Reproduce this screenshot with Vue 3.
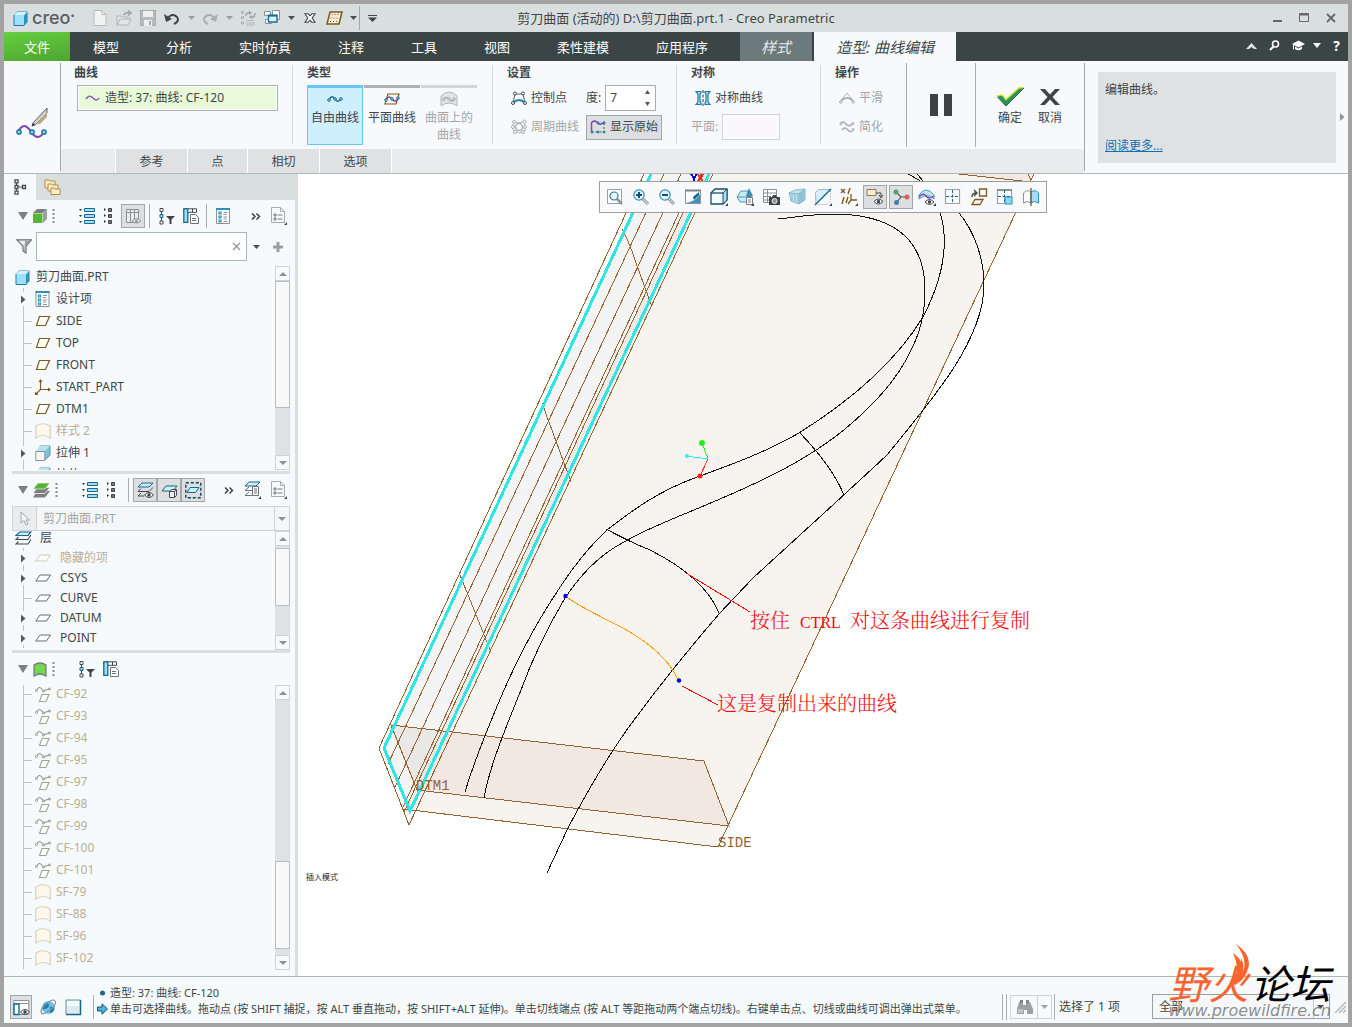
<script setup>
import { h, ref } from 'vue'

const DARK = '#444a4c'
const BLUE = '#17688c'
const SKY = '#9fdcf7'
const BROWN = '#7d5a20'

const lens = (inner) =>
  `<path d="M11 11l5 5" stroke="#7f888c" stroke-width="3"/><path d="M11 11l5 5" stroke="#d5dadc" stroke-width="1.200"/><circle cx="7" cy="7" r="5.200" fill="#dff3fc" stroke="#3d8fb2" stroke-width="1.200"/>${inner}`
const eye = (x, y) =>
  `<path d="M${x} ${y}q4.500 -5 9 0q-4.500 5 -9 0z" fill="#fff" stroke="#3d4345"/><circle cx="${x + 4.5}" cy="${y}" r="1.700" fill="#3d4345"/>`
const corner = '<path d="M18 15v3h-3z" fill="#444"/>'

// name: [width, height, markup]
const icons = {
  cube: [15, 15, `<path d="M1 4.500l3-3.500h10v10l-3 3.500H1z" fill="#9ee0fb" stroke="#1d7ea8"/><path d="M11 4.500l3-3.500v10l-3 3.500z" fill="#2a93bf"/><path d="M1 4l3-3h10l-3 3z" fill="#d3f2fe"/>`],
  fresh: [16, 16, '<path d="M2 .5h8l4 4v11H2z" fill="#f1f3f3" stroke="#b6babb"/><path d="M10 .5v4h4" fill="none" stroke="#b6babb"/>'],
  open: [16, 16, '<path d="M1 15V6h4l1 1h6v2M1 15l3-6h11l-3 6z" fill="#e2e5e5" stroke="#b0b5b6"/><path d="M8 5q1-3 6-2M12 .5l3 2.500-3 2.500" fill="none" stroke="#9da3a4" stroke-width="1.500"/>'],
  save: [16, 16, '<path d="M.5 .5h15v15H.5z" fill="#b7bbbc" stroke="#a5aaab"/><path d="M3 1h10v6H3z" fill="#eef0f0"/><path d="M4 10h8v6H4z" fill="#eceeee"/><path d="M9 11h2v4H9z" fill="#a5aaab"/>'],
  undo: [16, 14, '<path d="M3 8q5-7 10-2q3 4-3 7" fill="none" stroke="#3f4547" stroke-width="2"/><path d="M0 3l2 8 6-3z" fill="#3f4547"/>'],
  redo: [16, 14, '<path d="M13 8q-5-7-10-2q-3 4 3 7" fill="none" stroke="#a9aeaf" stroke-width="2"/><path d="M16 3l-2 8-6-3z" fill="#a9aeaf"/>'],
  drop: [7, 4, '<path d="M0 0h7l-3.500 4z" fill="#4a5052"/>'],
  dropLight: [7, 4, '<path d="M0 0h7l-3.500 4z" fill="#9ba1a2"/>'],
  regen: [16, 16, '<path d="M1.500 1.500h2v2h-2zM1.500 6.500h2v2h-2zM1.500 12h2v2h-2z" fill="none" stroke="#a8adae"/><path d="M6 13h9M6 15h9M6 10.500h8" stroke="#b5babb"/><path d="M6 6q0-4 4-3M15 3q0 5-4 4" fill="none" stroke="#9da3a4" stroke-width="1.500"/><path d="M9 .5l3 2.500-3 2zM12 9l-3-2 3-2z" fill="#9da3a4"/>'],
  windows: [16, 16, '<path d="M.5 1.500h6v4h-6zM1.500 9.500h6v4h-6z" fill="#fff" stroke="#8c9294"/><path d="M8.500 .5h7v9h-7z" fill="#fff" stroke="#8c9294"/><path d="M4.500 5.500H13V12H4.500z" fill="#d9f2fd" stroke="#1b6f95" stroke-width="1.400"/><path d="M4 5.500h9.500" stroke="#1b6f95" stroke-width="2"/>'],
  xbox: [12, 10, '<path d="M1 .8h3.200l1.800 2 1.800-2H11L8.200 5 11 9.200H7.800L6 7.200l-1.800 2H1L3.800 5z" fill="#fff" stroke="#3f4547" stroke-width="1.100"/>'],
  sketchPlane: [17, 14, `<path d="M4 1h12l-3 12H1z" fill="#f5ecd6" stroke="${BROWN}" stroke-width="1.500"/><path d="M5.500 3.500h8M4.500 7h8M4 10.500h8" stroke="${BROWN}" stroke-dasharray="1 2"/>`],
  custom: [9, 7, '<path d="M0 .5h9" stroke="#3f4547"/><path d="M0 2.500h9L4.500 7z" fill="#3f4547"/>'],
  min: [10, 12, '<path d="M0 9h9" stroke="#666" stroke-width="2"/>'],
  max: [11, 10, '<path d="M.5 .5h9v8h-9z" fill="none" stroke="#666"/><path d="M0 1.500h10" stroke="#666" stroke-width="2"/>'],
  close: [10, 10, '<path d="M1 1l8 8M9 1l-8 8" stroke="#666" stroke-width="1.800"/>'],
  chevUp: [11, 6, '<path d="M0 6L5.500 0 11 6H8L5.500 4 3 6z" fill="#dfe5e4"/>'],
  find: [11, 11, '<circle cx="6.500" cy="4" r="3" fill="none" stroke="#fff" stroke-width="1.600"/><path d="M4.500 6.500L1 10" stroke="#fff" stroke-width="2"/>'],
  hat: [13, 11, '<path d="M0 4l6.500-3.500L13 4 6.500 7.500z" fill="#fff"/><path d="M3 6.500v2.500q3.500 2.500 7 0V6.500L6.500 8.500z" fill="#fff"/><path d="M1.500 4.500v5" stroke="#fff"/>'],
  dropWhite: [8, 5, '<path d="M0 0h8L4 5z" fill="#fff"/>'],
  brush: [32, 32, '<path d="M31 1L17 16l-1 3 3-1L31 6z" fill="#cfd4d6" stroke="#596063"/><path d="M31 5L20 17h4l7-7z" fill="#c7a67e"/><path d="M17 16l-1 3 3-1z" fill="#333"/><path d="M2 25q5-10 11-3l3 4q6 9 13-2" fill="none" stroke="#7d49b5" stroke-width="2"/><g fill="#7fd0ef" stroke="#1b6f95" stroke-width="1.300"><circle cx="3" cy="25" r="2.200"/><circle cx="16" cy="25" r="2.200"/><circle cx="28" cy="25" r="2.200"/></g>'],
  wave: [15, 6, '<path d="M1 4q3-5 7-1t6 0" fill="none" stroke="#8a5cc0" stroke-width="1.500"/>'],
  freeCurve: [16, 8, '<path d="M2 5q3-6 6-1t6-1" fill="none" stroke="#17688c" stroke-width="1.300"/><g fill="#bfe8f8" stroke="#17688c"><circle cx="2" cy="5" r="1.300"/><circle cx="8" cy="4" r="1.300"/><circle cx="14" cy="4" r="1.300"/></g>'],
  planeCurve: [16, 12, `<path d="M4 1h11l-3 10H1z" fill="#fbf6ea" stroke="${BROWN}" stroke-width="1.200"/><path d="M1.500 7.500q3-6 6.500-1.500t6.500-1" fill="none" stroke="#7d49b5" stroke-width="1.500"/><g fill="#bfe8f8" stroke="#17688c"><circle cx="2" cy="7" r="1.300"/><circle cx="8" cy="6" r="1.300"/><circle cx="14" cy="5" r="1.300"/></g>`],
  surfCurve: [18, 16, '<path d="M1 5q8-8 16 0v10q-8-6-16 0z" fill="#e2e4e5" stroke="#b3b8ba"/><path d="M3 10q3-6 6-2t6 0" fill="none" stroke="#a5abad" stroke-width="1.300"/><g fill="#eee" stroke="#a5abad"><circle cx="4" cy="8" r="1.300"/><circle cx="9" cy="8" r="1.300"/><circle cx="14" cy="8" r="1.300"/></g>'],
  ctrl: [16, 15, '<path d="M2 12L4 3h8l2 9" fill="none" stroke="#596063"/><path d="M2 12q6-6 12 0" fill="none" stroke="#1d86b5" stroke-width="2"/><g fill="#fff" stroke="#444a4c"><circle cx="4" cy="2.500" r="1.500"/><circle cx="12" cy="2.500" r="1.500"/><circle cx="2" cy="12" r="1.500"/><circle cx="14" cy="12" r="1.500"/></g>'],
  periodic: [16, 16, '<path d="M3 3l5 1 6-2v6l0 4-6 2-6-3V7z" fill="none" stroke="#b0b5b7"/><circle cx="8" cy="8" r="3.500" fill="none" stroke="#b0b5b7" stroke-width="1.500"/><g fill="#fff" stroke="#a8adaf"><circle cx="3" cy="3" r="1.500"/><circle cx="13.500" cy="2.500" r="1.500"/><circle cx="2" cy="8" r="1.500"/><circle cx="14" cy="8" r="1.500"/><circle cx="4" cy="13" r="1.500"/><circle cx="12" cy="13" r="1.500"/></g>'],
  original: [16, 14, '<path d="M1.500 11V4q0-3 3.500-3l2 1q2 3 4 2t4-2" fill="none" stroke="#7d49b5" stroke-width="1.500"/><path d="M1.500 12h13M14 3v8" stroke="#17688c" stroke-dasharray="2 2"/><g fill="#9fdcf7" stroke="#17688c"><circle cx="2" cy="12" r="1"/><circle cx="8" cy="12" r="1"/><circle cx="14" cy="12" r="1"/><circle cx="8" cy="3" r="1"/><circle cx="14" cy="3" r="1"/></g>'],
  mirror: [16, 16, '<path d="M1 1.500h5v1q-1 1-1 2.500v5q0 2 1 3v1.500H1q2-2 2-3V5q0-1.500-2-3.500zM15 1.500h-5v1q1 1 1 2.500v5q0 2-1 3v1.500h5q-2-2-2-3V5q0-1.500 2-3.500z" fill="#a6dcf2" stroke="#1d7ea8" stroke-width="1.200"/><path d="M8 0v16" stroke="#333" stroke-dasharray="3 1.500"/>'],
  smooth: [16, 12, '<path d="M1 10L8 1l7 9" fill="none" stroke="#b5babc"/><path d="M1 10q7-8 14 0" fill="none" stroke="#9da3a5" stroke-width="1.500"/><g fill="#fff" stroke="#a8adaf"><circle cx="1.800" cy="10" r="1.200"/><circle cx="14.200" cy="10" r="1.200"/></g>'],
  simplify: [16, 12, '<path d="M1 3q3-4 6 0t7-1M3 9q3-4 6 0t6-1" fill="none" stroke="#a8adaf" stroke-width="1.400"/><g fill="#fff" stroke="#a8adaf"><circle cx="2" cy="3" r="1"/><circle cx="14" cy="2.500" r="1"/><circle cx="14" cy="8.500" r="1"/></g>'],
  pause: [24, 22, '<path d="M1 0h8v22H1zM15 0h8v22h-8z" fill="#3f4041"/>'],
  check: [29, 20, '<path d="M1 9l5-1 4 5L23 1l5-.5L10 19z" fill="#2f8f5f"/><path d="M1 9l5-1 4 4.500L23 1l5-.5" fill="none" stroke="#c9e81a" stroke-width="1.300"/><path d="M1.500 10L10 19 28 1" fill="none" stroke="#156b36"/>'],
  cross: [20, 16, '<path d="M0 0h5l5 5.500L15 0h5l-7.500 8 7.500 8h-5l-5-5.500L5 16H0l7.500-8z" fill="#3f4547"/>'],
  helpNext: [5, 8, '<path d="M0 0l4.500 4L0 8z" fill="#8f9597"/>'],
  treeTab: [13, 16, `<path d="M2.500 3v10M4 8h4" stroke="${DARK}"/><path d="M1 .8h3v3H1zM1 6.500h3v3H1zM1 12.200h3v3H1zM8.500 6.500h3v3h-3z" fill="#fff" stroke="${DARK}" stroke-width="1.300"/>`],
  folders: [17, 16, '<g fill="#fdeecb" stroke="#b98a3c"><path d="M1 1h4l1 1h5v7H1z"/><path d="M4 5h4l1 1h5v6H4z"/><path d="M7 9h3l1 1h5v5.500H7z"/></g>'],
  tri: [10, 8, '<path d="M0 0h10L5 8z" fill="#7b8183"/>'],
  greenCube: [14, 14, '<path d="M0 4l4-4h10L9.500 4z" fill="#7b7f80"/><path d="M10 4l4-4v10l-4 4z" fill="#9a9e9f"/><path d="M0 4.500h9.500V14H0z" fill="#57b536"/>'],
  greenStack: [17, 16, '<path d="M4 9h13l-5 6.500H0z" fill="#7b7f80"/><path d="M4 5.500h13L12 11.500H0z" fill="#7b7f80" stroke="#f6fafb" stroke-width=".8"/><path d="M0 7l5-6h12l-5 6z" fill="#57b536" stroke="#f6fafb" stroke-width=".6"/>'],
  greenSurf: [14, 15, '<path d="M1 3q6-4 12 0v11q-6-4-12 0z" fill="#74d84e" stroke="#777c7d" stroke-width="1.300"/>'],
  grip: [3, 16, '<path d="M1.500 1v15" stroke="#888e90" stroke-width="2" stroke-dasharray="2 2"/>'],
  expandAll: [16, 16, `<path d="M0 1h3l-1.500 2zM0 7h3l-1.500 2zM0 13h3l-1.500 2z" fill="#333"/><path d="M5.500 .5h10v3h-10zM5.500 6.500h10v3h-10zM5.500 12.500h10v3h-10z" fill="${SKY}" stroke="${BLUE}"/>`],
  collapseAll: [10, 16, '<path d="M1 0l2 1.500-2 1.500zM1 6l2 1.500-2 1.500zM1 12l2 1.500-2 1.500z" fill="#333"/><path d="M5.500 .5h3v3h-3zM5.500 6.500h3v3h-3zM5.500 12.500h3v3h-3z" fill="#777" stroke="#444"/>'],
  columnsOff: [17, 17, '<path d="M1.500 1.500h12v13h-12z" fill="#e9ebec" stroke="#8b9194"/><path d="M1 4.500h13M5.500 1v14M9.500 1v14" stroke="#8b9194"/><path d="M7 13q4.500-5 9 0-4.500 4-9 0z" fill="#eee" stroke="#8b9194"/><circle cx="11.500" cy="13" r="1.500" fill="#8b9194"/>'],
  treeFilter: [16, 17, `<path d="M2.500 2v13" stroke="${DARK}"/><path d="M1 .5h3v3H1zM1 13h3v3H1z" fill="#fff" stroke="${DARK}"/><path d="M1 6.500h3v3H1z" fill="${SKY}" stroke="${BLUE}"/><path d="M7 8h9l-3.500 3.500V16h-2v-4.500z" fill="#3f4547"/>`],
  columns: [16, 16, `<path d="M1 .8h12.500v3.500H1z" fill="#fff" stroke="${DARK}"/><path d="M9.500 1v4" stroke="${DARK}"/><path d="M.8 .8h4v13.500h-4z" fill="${SKY}" stroke="${BLUE}" stroke-width="1.300"/><path d="M7.500 6.500h5l3 3v6h-8z" fill="#fff" stroke="#6b7274"/><path d="M9 10.500h4M9 12.500h4" stroke="#6b7274"/>`],
  listDoc: [15, 16, `<path d="M.5 .5h13v15H.5z" fill="#fff" stroke="#8b9295"/><path d="M0 1h14" stroke="#2d8fba" stroke-width="2"/><path d="M3 4h2v2H3zM3 8h2v2H3zM3 12h2v2H3z" fill="#fff" stroke="#2d8fba" stroke-width="1.200"/><path d="M7.500 4.500h4M7.500 6.500h3M7.500 9h4M7.500 11h3M7.500 13.500h4" stroke="#8b9295"/>`],
  more: [10, 7, '<path d="M1 .5l3 3-3 3M5.500 .5l3 3-3 3" fill="none" stroke="#333" stroke-width="1.400"/>'],
  docMenu: [17, 18, '<path d="M.5 .5h9l4 4v11H.5z" fill="#f8f9fa" stroke="#a4aaad"/><path d="M9.500 .5v4h4" fill="none" stroke="#a4aaad"/><path d="M3 7h2v2H3zM3 11h2v2H3z" fill="none" stroke="#777d80"/><path d="M6.500 8h5M6.500 12h5" stroke="#777d80"/><path d="M16 15v3h-3z" fill="#444"/>'],
  layerDoc: [17, 18, `<path d="M5 1h11l-4 4H1z" fill="#cdeefb" stroke="${BLUE}"/><path d="M5 6l-4 3.500h9M5 11l-4 3.500h7" fill="none" stroke="#6b7274"/><path d="M8.500 5.500h6v9h-6z" fill="#fff" stroke="#6b7274"/><path d="M10 8h3M10 10h3M10 12h3" stroke="#6b7274"/><path d="M17 15v3h-3z" fill="#444"/>`],
  layerEye: [17, 17, `<path d="M5 1h11l-4 4H1z" fill="#cdeefb" stroke="${BLUE}"/><path d="M16 5.500L12 9.500H1l3-3M7 14H1l3-3" fill="none" stroke="#444a4c"/>${eye(7.5, 13)}`],
  layerBox: [17, 17, `<path d="M5 4h11l-4 5H1z" fill="#cdeefb" stroke="${BLUE}"/><path d="M8.500 9.500l2-2h5v6l-2 2h-5z" fill="#eee" stroke="#444a4c"/><path d="M8.500 9.500h5v6M13.500 9.500l2-2" fill="none" stroke="#444a4c"/>`],
  layerSel: [17, 17, `<path d="M.8 .8h15v15H.8z" fill="none" stroke="#12445c" stroke-width="1.400" stroke-dasharray="3 2"/><path d="M5 5.500h9l-3.500 5H2z" fill="#cdeefb" stroke="${BLUE}"/>`],
  funnel: [16, 15, '<path d="M.8 .8h14.500L10 7v7l-3-2V7z" fill="#f0f1f1" stroke="#666c6e" stroke-width="1.200"/><path d="M9 2h5L9.500 7v6H8z" fill="#9a9fa1"/>'],
  clear: [9, 9, '<path d="M1 1l7 7M8 1L1 8" stroke="#8f9597" stroke-width="1.300"/>'],
  plus: [12, 12, '<path d="M6 1v10M1 6h10" stroke="#999e9f" stroke-width="3"/>'],
  plane: [16, 16, `<path d="M4.500 3.500h10l-4 9H1.500z" fill="#fffdf8" stroke="${BROWN}" stroke-width="1.200"/>`],
  csys: [16, 16, `<path d="M5.500 1v9.500H15M5.500 10.500L1 15" fill="none" stroke="${BROWN}" stroke-width="1.200"/><path d="M3.500 3L5.500 0l2 3zM13 8.500l3 2-3 2zM0 12.500V16h3.500z" fill="${BROWN}"/>`],
  surf: [16, 16, '<path d="M.8 3q7-4.500 14.400 0v12q-7-5-14.400 0z" fill="#fdf8ec" stroke="#d9cfc0" stroke-width="1.200"/>'],
  extrude: [16, 16, `<path d="M5 1h10v9l-5 5H5z" fill="#7cc4e2" stroke="#5e8ea3"/><path d="M5 1h10l-5 5H1z" fill="#b9e3f4"/><path d="M.8 6.500h9v9h-9z" fill="#f8f8f8" stroke="#8b9295"/>`],
  cfItem: [16, 16, '<path d="M1.500 4q3-5 6 0M8 5q3-1 6.500-2" fill="none" stroke="#8f9284" stroke-width="1.100"/><g fill="#fafafa" stroke="#8f9284"><circle cx="1.500" cy="4.500" r="1"/><circle cx="8.500" cy="5" r="1"/><circle cx="14.500" cy="3" r="1"/></g><path d="M7 8.500h7l-3 7H4.500z" fill="#fff" stroke="#a0a295" stroke-width="1.100"/>'],
  layers: [17, 15, `<path d="M5 1h11l-3 3.500H1z" fill="#cdeefb" stroke="${BLUE}" stroke-width="1.200"/><path d="M16 4L13 8.500H1l2.500-2.500M16 8.500L13 13H1l2.500-2.500" fill="none" stroke="#444a4c" stroke-width="1.100"/>`],
  layer: [16, 8, '<path d="M5 1h10.500l-4 6H.8z" fill="#fff" stroke="#666c6e"/>'],
  layerFaint: [16, 8, '<path d="M5 1h10.500l-4 6H.8z" fill="#fff" stroke="#cfc9b8"/>'],
  branch: [14, 22, '<path d="M4.500 0v22M5 11.500h8" stroke="#bfc3c5" fill="none"/>'],
  expand: [14, 22, '<path d="M4.500 0v4M4.500 18v4" stroke="#bfc3c5"/><path d="M2 7.500l4.500 4-4.500 4z" fill="#555b5d"/>'],
  cursor: [12, 16, '<path d="M2 1v11l3-2.500 2 4.500 2-1-2-4h3.500z" fill="#f3f3f3" stroke="#a4a8aa"/>'],
  up: [8, 4, '<path d="M0 4l4-4 4 4z" fill="#8b9194"/>'],
  down: [8, 4, '<path d="M0 0h8L4 4z" fill="#8b9194"/>'],
  spinUp: [5, 4, '<path d="M0 4l2.500-4L5 4z" fill="#555"/>'],
  spinDown: [5, 4, '<path d="M0 0h5L2.500 4z" fill="#555"/>'],
  zoomFit: [18, 18, `<path d="M1.500 1.500h14v14h-14z" fill="#fff" stroke="#9aa1a4"/><path d="M11 11l5 5" stroke="#8d9599" stroke-width="2.500"/><circle cx="8" cy="8" r="4" fill="#e9f7fd" stroke="#2b7c9f" stroke-width="1.200"/>`],
  zoomIn: [18, 18, lens('<path d="M4 7h6M7 4v6" stroke="#17506b" stroke-width="2"/>')],
  zoomOut: [18, 18, lens('<path d="M4 7h6" stroke="#17506b" stroke-width="2"/>')],
  repaint: [18, 18, '<path d="M1.500 2.500h15v13h-15z" fill="#fff" stroke="#8b9295"/><path d="M2 15q9-1 14-9v9z" fill="#3d93b8"/><path d="M1 2.500h16" stroke="#7b8386" stroke-width="2"/><path d="M9 9l6-5v3l-5 5z" fill="#155f80"/>'],
  solid: [18, 18, `<path d="M1 5l4-4h12v11l-4 4H1z" fill="#f2fbff" stroke="#174f69" stroke-width="1.300"/><path d="M13 5l4-4v11l-4 4z" fill="#a8dff5" stroke="#174f69"/><path d="M1 5h12" stroke="#174f69" stroke-width="1.300"/>${corner}`],
  saved: [18, 18, '<path d="M1 9l4-6h7v11H4z" fill="#c8ebf8" stroke="#4b98b8"/><path d="M1 9h10" stroke="#4b98b8"/><path d="M13 0l4 8q-4 3-7 0z" fill="#3b8fb4"/><path d="M10.500 9.500h6v7h-6z" fill="#fff" stroke="#777d80"/><path d="M12 12h3M12 14h3" stroke="#777d80"/><path d="M18 15v3h-3z" fill="#444"/>'],
  camera: [18, 18, '<path d="M1.500 1.500h13v13h-13z" fill="#fff" stroke="#8b9295"/><path d="M1 5h13M1 8.500h8M1 12h6M5.500 1v13" stroke="#8b9295"/><path d="M7 9h3l1-2h3l1 2h3v8H7z" fill="#3f4547"/><circle cx="12.500" cy="13" r="2.500" fill="#8d9599" stroke="#e6e6e6"/>'],
  persp: [18, 18, '<path d="M1 5l6-3 10-1v11l-6 4-8-3z" fill="#c5e4f0" stroke="#8fb7c8"/><path d="M1 5l9 1v10M10 6l7-5M4 6v7M7 6v8" fill="none" stroke="#7db2c9"/><path d="M10 6l7-5v11l-6 4z" fill="#8fc3d8"/>'],
  section: [18, 18, `<path d="M1.500 4.500l3-3h12L2 16z" fill="#d5f0fb" stroke="#9fb4bc"/><path d="M1 17L17 1" stroke="#1d6a8c" stroke-width="1.400"/><path d="M16.500 3v10l-3 3.500H4" fill="none" stroke="#999" stroke-dasharray="1 1.500"/>${corner}`],
  datums: [18, 18, `<path d="M1 1l4 4M5 1L1 5M10 0L8 6M4 9l-2 7M8 9l-2 6" stroke="${BROWN}" stroke-width="1.400"/><path d="M11 6v6h6M11 12l-3 4" fill="none" stroke="${BROWN}" stroke-width="1.300"/><path d="M18 15v3h-3z" fill="#444"/>`],
  annot: [18, 18, `<path d="M1 1.500h9v6H1z" fill="#fdeecb" stroke="#8b7a55"/><path d="M10 5h5v4M13 7l2 3 2-3" fill="none" stroke="#444"/>${eye(8, 13.5)}`],
  spin: [18, 18, '<path d="M4 4l5 5h6M9 9l-4 5" stroke="#555" stroke-width="1.200" fill="none"/><circle cx="4" cy="4" r="2.500" fill="#57a06b"/><circle cx="15" cy="9" r="2.500" fill="#d8605c"/><circle cx="4.500" cy="14.500" r="2.500" fill="#3b86b0"/>'],
  surfEye: [18, 18, `<path d="M1 7q7-10 15 0v4q-7-7-15 0z" fill="#bfe8f8" stroke="#4b98b8"/><path d="M1 9q4-5 7-1t8 0" fill="none" stroke="#8c3fc0" stroke-width="1.400"/>${eye(7, 14)}<path d="M18 15v3h-3z" fill="#444"/>`],
  grid4: [18, 18, `<path d="M1.500 1.500h14v14h-14z" fill="#fff" stroke="#9aa1a4" stroke-width="1.200"/><path d="M8.500 2v13M2 8.500h13" stroke="${BLUE}" stroke-dasharray="3 1.500"/>`],
  orient: [18, 18, `<path d="M9.500 1h7v7h-7z" fill="#fffdf8" stroke="${BROWN}" stroke-width="1.300"/><path d="M5 11.500h8l-3 5H2z" fill="#fffdf8" stroke="${BROWN}" stroke-width="1.300"/><path d="M2 9q0-4 4-4M4 2l3 3-3 3" fill="none" stroke="#444" stroke-width="1.400"/>`],
  gridSel: [18, 18, `<path d="M1.500 1.500h14v14h-14z" fill="#fff" stroke="#9aa1a4" stroke-width="1.200"/><path d="M1 2h15" stroke="#8b9295" stroke-width="2"/><path d="M8.500 2v13M2 8.500h13" stroke="${BLUE}" stroke-dasharray="3 1.500"/><path d="M9 9h7v7H9z" fill="#8fd9f7" stroke="#2d8fba"/>`],
  mirrorSurf: [18, 18, '<path d="M1.500 5q4-4 7.500-1v11q-4-3-7.500 0z" fill="#fff" stroke="#8b9295"/><path d="M9 4q4-3 7.500 1v10q-4-3-7.500 0z" fill="#a6dcf2" stroke="#2d8fba"/><path d="M9 0v18" stroke="#7d5a20" stroke-width="1.300"/>'],
  paneEye: [17, 17, `<path d="M.8 1.500h15v14H.8z" fill="#fff" stroke="#8b9295"/><path d="M1 4.500h15" stroke="#8b9295"/><path d="M1 5h5v10.500H1z" fill="#fff" stroke="${BLUE}" stroke-width="1.400"/>${eye(7.5, 13)}`],
  globe: [17, 17, '<circle cx="8.500" cy="8.500" r="6.500" fill="#6cc2ec"/><path d="M5 4q4-1 4 2t-4 4-2-3zM10 8q4-1 4 2t-4 4z" fill="#1d7fb2"/><path d="M2 15Q-1 11 6 5T15 2q2 3-4 8T2 15z" fill="none" stroke="#8b9295" stroke-width="1.200"/>'],
  pane: [17, 17, '<path d="M1 1h14.500v14.500H1z" fill="#dcebf2" stroke="#6d93a4"/><path d="M15.500 1v14.500H1" fill="none" stroke="#17688c" stroke-width="1.500"/><path d="M2 2h12v5H2z" fill="#f7fbfd"/>'],
  bullet: [11, 12, '<circle cx="5.500" cy="6" r="2.500" fill="#17688c"/>'],
  arrow: [11, 12, '<path d="M.5 4H5V.8L10.500 6 5 11.200V8H.5z" fill="#4cb6e0" stroke="#17506b"/>'],
  binoc: [17, 15, '<path d="M3 3h4v3h3V3h4l3 7v5h-6v-4H8v4H1v-5z" fill="#9ba1a3"/><path d="M4 1h3v3H4zM10 1h3v3h-3z" fill="#7d8486"/><path d="M2 10h5v4H2z" fill="#c2c6c7"/>'],
  sizer: [12, 12, '<path d="M1 12L12 1M5 12l7-7M9 12l3-3" stroke="#b3babb" stroke-width="1.500"/>'],
  flame: [20, 42, '<path d="M4 0Q22 12 15 28Q12 36 3 41Q-1 38 1 33Q10 26 9 14Q14 24 9 31Q18 18 4 0Z" fill="#fb6430"/><path d="M1 9Q14 18 10 31L3 40Q8 24 1 9Z" fill="#fb6430"/>'],
}

const Icon = (props) => {
  const [w, hgt, markup] = icons[props.name]
  return h('svg', { width: w, height: hgt, viewBox: `0 0 ${w} ${hgt}`, class: 'icon', 'aria-hidden': 'true', innerHTML: markup })
}
Icon.props = ['name']

const tabs = ['模型', '分析', '实时仿真', '注释', '工具', '视图', '柔性建模', '应用程序']
const panels = ['参考', '点', '相切', '选项']
const viewTools = ['zoomFit', 'zoomIn', 'zoomOut', 'repaint', 'solid', 'saved', 'camera', 'persp', 'section', 'datums', 'annot', 'spin', 'surfEye', 'grid4', 'orient', 'gridSel', 'mirrorSurf']
const pressed = ['annot', 'spin']

const model = [
  { label: '设计项', icon: 'listDoc', open: true },
  { label: 'SIDE', icon: 'plane' },
  { label: 'TOP', icon: 'plane' },
  { label: 'FRONT', icon: 'plane' },
  { label: 'START_PART', icon: 'csys' },
  { label: 'DTM1', icon: 'plane' },
  { label: '样式 2', icon: 'surf', faint: true },
  { label: '拉伸 1', icon: 'extrude', open: true },
  { label: '拉伸 2', icon: 'extrude' },
]
const layers = [
  { label: '隐藏的项', icon: 'layerFaint', open: true, faint: true },
  { label: 'CSYS', icon: 'layer', open: true },
  { label: 'CURVE', icon: 'layer' },
  { label: 'DATUM', icon: 'layer', open: true },
  { label: 'POINT', icon: 'layer', open: true },
]
const styleItems = [
  ...['CF-92', 'CF-93', 'CF-94', 'CF-95', 'CF-97', 'CF-98', 'CF-99', 'CF-100', 'CF-101'].map((label) => ({ label, icon: 'cfItem' })),
  ...['SF-79', 'SF-88', 'SF-96', 'SF-102'].map((label) => ({ label, icon: 'surf' })),
]

const degree = ref('7')
const query = ref('')
</script>

<template>
  <div class="window">
    <header class="titlebar">
      <div class="quick">
        <Icon name="cube" />
        <span class="brand">creo<sup>•</sup></span>
        <div class="quick-tools">
          <button v-for="n in ['fresh', 'open', 'save', 'undo']" :key="n" class="flat q" :aria-label="n"><Icon :name="n" /></button>
          <button class="flat d" aria-label="undo list"><Icon name="dropLight" /></button>
          <button class="flat q" aria-label="redo"><Icon name="redo" /></button>
          <button class="flat d" aria-label="redo list"><Icon name="dropLight" /></button>
          <button class="flat q" aria-label="regenerate"><Icon name="regen" /></button>
          <button class="flat q" aria-label="windows"><Icon name="windows" /></button>
          <button class="flat d" aria-label="window list"><Icon name="drop" /></button>
          <button class="flat q" aria-label="close window"><Icon name="xbox" /></button>
          <button class="flat q" aria-label="sketch plane"><Icon name="sketchPlane" /></button>
          <span class="quick-end">
            <button class="flat d" aria-label="plane list"><Icon name="drop" /></button>
            <button class="flat custom" aria-label="customize"><Icon name="custom" /></button>
          </span>
        </div>
      </div>
      <h1>剪刀曲面 (活动的) D:\剪刀曲面.prt.1 - Creo Parametric</h1>
      <div class="controls">
        <button v-for="n in ['min', 'max', 'close']" :key="n" class="flat" :aria-label="n"><Icon :name="n" /></button>
      </div>
    </header>

    <nav class="tabs">
      <button class="file">文件</button>
      <div class="tab-list">
        <button v-for="t in tabs" :key="t" class="flat tab">{{ t }}</button>
      </div>
      <button class="style-tab">样式</button>
      <button class="active-tab">造型: 曲线编辑</button>
      <div class="tab-tools">
        <button class="flat" aria-label="collapse"><Icon name="chevUp" /></button>
        <button class="flat" aria-label="search"><Icon name="find" /></button>
        <button class="flat pair" aria-label="learn"><Icon name="hat" /><Icon name="dropWhite" /></button>
        <button class="flat help" aria-label="help">?</button>
      </div>
    </nav>

    <section class="ribbon">
      <div class="feature"><Icon name="brush" /></div>
      <div class="ribbon-main">
        <div class="groups">
          <div class="group curve">
            <h2>曲线</h2>
            <div class="collector"><div class="collected"><Icon name="wave" />造型: 37: 曲线: CF-120</div></div>
          </div>
          <div class="group type">
            <h2>类型</h2>
            <div class="tiles">
              <button class="tile on"><span class="glyph"><Icon name="freeCurve" /></span>自由曲线</button>
              <button class="tile"><span class="glyph"><Icon name="planeCurve" /></span>平面曲线</button>
              <button class="tile off"><span class="glyph"><Icon name="surfCurve" /></span>曲面上的<br>曲线</button>
            </div>
          </div>
          <div class="group settings">
            <h2>设置</h2>
            <div class="line">
              <button class="flat cmd first"><Icon name="ctrl" />控制点</button>
              <label for="degree">度:</label>
              <span class="spinner">
                <input id="degree" v-model="degree" type="text">
                <span class="spin-arrows"><Icon name="spinUp" /><Icon name="spinDown" /></span>
              </span>
            </div>
            <div class="line">
              <button class="flat cmd first dim"><Icon name="periodic" />周期曲线</button>
              <button class="toggle"><Icon name="original" />显示原始</button>
            </div>
          </div>
          <div class="group symmetry">
            <h2>对称</h2>
            <div class="line"><button class="flat cmd"><Icon name="mirror" />对称曲线</button></div>
            <div class="line plane-line"><label for="plane" class="dim">平面:</label><input id="plane" class="plane-box" type="text" disabled></div>
          </div>
          <div class="group ops">
            <h2>操作</h2>
            <div class="line"><button class="flat cmd dim"><Icon name="smooth" />平滑</button></div>
            <div class="line"><button class="flat cmd dim"><Icon name="simplify" />简化</button></div>
          </div>
          <div class="group pause"><button class="flat" aria-label="pause"><Icon name="pause" /></button></div>
          <div class="group confirm">
            <button class="flat big"><span><Icon name="check" /></span>确定</button>
            <button class="flat big"><span><Icon name="cross" /></span>取消</button>
          </div>
        </div>
        <div class="strip">
          <span class="strip-lead"></span>
          <button v-for="p in panels" :key="p" :class="{ narrow: p.length === 1 }">{{ p }}</button>
        </div>
      </div>
      <aside class="tip">
        <div class="tip-box">
          <p>编辑曲线。</p>
          <a href="#more">阅读更多...</a>
        </div>
        <Icon name="helpNext" />
      </aside>
    </section>

    <main class="body">
      <div class="side">
        <div class="side-tabs">
          <button class="side-tab on" aria-label="model tree"><Icon name="treeTab" /></button>
          <button class="side-tab" aria-label="folders"><Icon name="folders" /></button>
        </div>

        <div class="bar">
          <div class="bar-lead"><Icon name="tri" /><Icon name="greenCube" /><Icon name="grip" /></div>
          <div class="bar-set">
            <button class="flat" aria-label="expand all"><Icon name="expandAll" /></button>
            <button class="flat" aria-label="collapse all"><Icon name="collapseAll" /></button>
            <button class="held" aria-label="tree columns"><Icon name="columnsOff" /></button>
          </div>
          <div class="bar-set ruled">
            <button class="flat" aria-label="tree filters"><Icon name="treeFilter" /></button>
            <button class="flat" aria-label="columns"><Icon name="columns" /></button>
          </div>
          <div class="bar-set ruled"><button class="flat" aria-label="list"><Icon name="listDoc" /></button></div>
          <div class="bar-end">
            <button class="flat" aria-label="more"><Icon name="more" /></button>
            <button class="flat" aria-label="settings"><Icon name="docMenu" /></button>
          </div>
        </div>

        <div class="filter">
          <Icon name="funnel" />
          <span class="filter-box">
            <input v-model="query" type="text" aria-label="filter">
            <button class="flat" aria-label="clear"><Icon name="clear" /></button>
          </span>
          <button class="flat" aria-label="filter options"><Icon name="drop" /></button>
          <button class="flat" aria-label="add"><Icon name="plus" /></button>
        </div>

        <div class="pane tree">
          <ul>
            <li class="root"><Icon name="cube" />剪刀曲面.PRT</li>
            <li v-for="n in model" :key="n.label" :class="{ faint: n.faint }">
              <Icon :name="n.open ? 'expand' : 'branch'" /><Icon :name="n.icon" class="node" />{{ n.label }}
            </li>
          </ul>
          <div class="scroll">
            <span class="cap"><Icon name="up" /></span><span class="thumb tall"></span>
            <span class="rest"></span><span class="cap"><Icon name="down" /></span>
          </div>
        </div>

        <div class="rule"></div>

        <div class="bar">
          <div class="bar-lead wide"><Icon name="tri" /><Icon name="greenStack" /><Icon name="grip" /></div>
          <div class="bar-set">
            <button class="flat" aria-label="expand layers"><Icon name="expandAll" /></button>
            <button class="flat" aria-label="collapse layers"><Icon name="collapseAll" /></button>
          </div>
          <div class="bar-set joined">
            <button v-for="n in ['layerEye', 'layerBox', 'layerSel']" :key="n" class="held" :aria-label="n"><Icon :name="n" /></button>
          </div>
          <div class="bar-end">
            <button class="flat" aria-label="more"><Icon name="more" /></button>
            <button class="flat" aria-label="layer menu"><Icon name="layerDoc" /></button>
            <button class="flat" aria-label="settings"><Icon name="docMenu" /></button>
          </div>
        </div>

        <div class="picker">
          <button aria-label="select"><Icon name="cursor" /></button>
          <select aria-label="active model" disabled><option>剪刀曲面.PRT</option></select>
          <span class="picker-arrow"><Icon name="down" /></span>
        </div>

        <div class="pane layer-list">
          <ul>
            <li class="root"><Icon name="layers" />层</li>
            <li v-for="n in layers" :key="n.label" :class="{ faint: n.faint }">
              <Icon :name="n.open ? 'expand' : 'branch'" /><Icon :name="n.icon" class="node" />{{ n.label }}
            </li>
          </ul>
          <div class="scroll">
            <span class="cap"><Icon name="up" /></span><span class="track-gap"></span><span class="thumb mid"></span>
            <span class="rest"></span><span class="cap"><Icon name="down" /></span>
          </div>
        </div>

        <div class="rule"></div>

        <div class="bar">
          <div class="bar-lead"><Icon name="tri" /><Icon name="greenSurf" /><Icon name="grip" /></div>
          <div class="bar-set">
            <button class="flat" aria-label="tree filters"><Icon name="treeFilter" /></button>
            <button class="flat" aria-label="columns"><Icon name="columns" /></button>
          </div>
        </div>

        <div class="pane items">
          <ul>
            <li v-for="n in styleItems" :key="n.label" class="faint">
              <Icon name="branch" /><Icon :name="n.icon" class="node" />{{ n.label }}
            </li>
          </ul>
          <div class="scroll">
            <span class="cap"><Icon name="up" /></span><span class="rest"></span>
            <span class="thumb low"></span><span class="track-end"></span><span class="cap"><Icon name="down" /></span>
          </div>
        </div>
      </div>

      <div class="canvas">
        <svg class="scene" viewBox="298 174 1050 802">
          <g shape-rendering="crispEdges" fill="none" stroke="#96622f">
            <path d="M709 174H1033L1031 180L718 847L403 809L409 812Z" fill="#f7f4f0" stroke="none" />
            <path d="M651 174L384 748L410 811L709 174Z" fill="#f4f4f5" stroke="none" />
            <path d="M701 174H709L410 811L404 812Z" fill="#eeeae7" stroke="none" />
            <path d="M391 725L704 761L729 826L417 790Z" fill="#f0e8e1" stroke="none" />
            <path d="M391 725L448 731L420 789Z" fill="#eae8e7" stroke="none" />
            <path d="M959 174L1031 182V174Z" fill="#f0e8e1" stroke="none" />
            <path d="M959 174L1031 182M1028 174L1031 180L1034 174M1031 180L718 847L403 809" />
            <path d="M644 174L379 748L409 825L713 174" />
            <path d="M664 174L388 764M681 174L395 787M697 174L403 807M701 174L404 812" />
            <path d="M622 229Q629 241 636 263L652 307M542 403L571 482M460 575L491 652" />
            <path d="M391 725L704 761L729 826L417 790Z" />
            <path d="M651 174L384 748L410 811L709 174" stroke="#2ce6e6" stroke-width="3" />
            <path d="M691 174L694 178L697 174M694 178V182" stroke="#0000e6" stroke-width="2" />
            <path d="M698 174L703 182M703 174L698 182" stroke="#ff2020" stroke-width="2" />
          </g>
          <g shape-rendering="crispEdges" fill="none" stroke="#111">
            <path d="M778 219C797 217 813 214 833 214C855 214 877 218 893 227C917 241 925 265 925 290C925 312 921 332 910 352C898 378 875 404 845 429C817 452 785 470 747 487C700 509 650 526 626 541C598 555 580 576 565 598C545 632 529 668 521 690C506 727 489 768 484 798" />
            <path d="M917 174C932 190 940 208 943 225C948 256 937 290 923 317C898 358 858 396 799 433C768 451 733 464 700 476C660 490 634 509 607 530C580 555 560 586 540 619C526 643 514 667 504 690C488 727 474 762 465 792" />
            <path d="M908 174C925 183 945 195 959 213C974 231 984 258 984 285C984 313 971 341 953 369C938 392 915 421 887 455C855 485 800 535 753 578L719 614C687 651 660 685 634 720C611 751 590 786 568 828L547 873" />
            <path d="M799 432Q832 466 844 495M606 529Q630 542 650 550Q704 577 719 613" />
            <path d="M565 596C583 609 606 619 623 628C650 643 670 661 678 680" stroke="#ff9a00" />
            <path d="M686 573L750 612M682 686L718 705" stroke="#f00" />
            <path d="M708 459L702 443" stroke="#22ee22" />
            <path d="M708 459L686 456" stroke="#2ef0f0" />
            <path d="M708 459L700 476" stroke="#f03030" />
          </g>
          <circle cx="702" cy="443" r="3" fill="#22ee22" />
          <circle cx="687" cy="456" r="2" fill="#2ef0f0" />
          <circle cx="700" cy="476" r="2.500" fill="#e22" />
          <circle cx="565.500" cy="596" r="2.200" fill="#0000e6" />
          <circle cx="679" cy="680.500" r="2.200" fill="#0000e6" />
          <g class="cad">
            <text x="416" y="790">DTM1</text>
            <text x="718" y="847">SIDE</text>
          </g>
          <g class="note">
            <text x="750" y="628">按住</text>
            <text x="800" y="628" class="latin">CTRL</text>
            <text x="850" y="628">对这条曲线进行复制</text>
            <text x="717" y="711">这是复制出来的曲线</text>
          </g>
          <text x="306" y="880" class="mode">插入模式</text>
        </svg>
        <div class="view-bar">
          <button v-for="n in viewTools" :key="n" :class="pressed.includes(n) ? 'held' : 'flat'" :aria-label="n"><Icon :name="n" /></button>
        </div>
      </div>
    </main>

    <footer class="status">
      <div class="status-tools">
        <button class="held" aria-label="navigator"><Icon name="paneEye" /></button>
        <button class="flat" aria-label="browser"><Icon name="globe" /></button>
        <button class="flat" aria-label="full screen"><Icon name="pane" /></button>
      </div>
      <div class="messages">
        <p><Icon name="bullet" />造型: 37: 曲线: CF-120</p>
        <p><Icon name="arrow" />单击可选择曲线。拖动点 (按 SHIFT 捕捉，按 ALT 垂直拖动，按 SHIFT+ALT 延伸)。单击切线端点 (按 ALT 等距拖动两个端点切线)。右键单击点、切线或曲线可调出弹出式菜单。</p>
      </div>
      <div class="status-end">
        <span class="finder">
          <button aria-label="find"><Icon name="binoc" /></button>
          <button class="finder-drop" aria-label="find list"><Icon name="dropLight" /></button>
        </span>
        <span class="picked">选择了 1 项</span>
        <span class="selection">
          <select aria-label="selection filter"><option>全部</option></select>
          <Icon name="drop" />
        </span>
        <Icon name="sizer" />
      </div>
    </footer>

    <div class="stamp">
      <div class="stamp-name"><span class="hot">野火</span><span>论坛</span></div>
      <div class="stamp-url">www.proewildfire.cn</div>
      <Icon name="flame" class="flame" />
    </div>
  </div>
</template>

<style>
body {
  margin: 0;
}
</style>

<style scoped>
.window {
  position: relative;
  box-sizing: border-box;
  height: 100vh;
  border: 4px solid #a3a3a3;
  display: flex;
  flex-direction: column;
  overflow: hidden;
  background: #f7f9fc;
  color: #404648;
  font: 12px/16px "Noto Sans", "Noto Sans CJK SC", sans-serif;
}
* {
  box-sizing: border-box;
}
h1, h2, p, ul {
  margin: 0;
  padding: 0;
}
.icon {
  display: block;
  flex: none;
}
button, input, select {
  font: inherit;
  color: inherit;
  margin: 0;
  padding: 0;
  border-radius: 0;
}
button {
  white-space: nowrap;
}
.flat {
  border: 0;
  background: none;
  display: flex;
  align-items: center;
  justify-content: center;
}
.dim {
  color: #a3a7a9;
}
.held {
  width: 24px;
  height: 24px;
  border: 1px solid #a3a7a9;
  background: #dcdee0;
  display: flex;
  align-items: center;
  justify-content: center;
}

/* title bar */
.titlebar {
  flex: 0 0 28px;
  display: grid;
  grid-template-columns: 1fr auto 1fr;
  align-items: center;
  background: #d9dfde;
}
.quick {
  display: flex;
  align-items: center;
  padding-left: 9px;
}
.brand {
  width: 60px;
  margin-left: 4px;
  font: 500 18px/20px Inter, sans-serif;
  color: #5a6062;
}
.brand sup {
  font-size: 8px;
  line-height: 8px;
  vertical-align: 6px;
}
.quick-tools {
  display: flex;
  align-items: center;
  gap: 8px;
}
.q {
  width: 16px;
  height: 20px;
}
.d {
  width: 6px;
  height: 20px;
}
.quick-end {
  display: flex;
  align-items: center;
  gap: 3px;
}
.custom {
  height: 24px;
  padding-left: 8px;
  border-left: 1px solid #a3a9a9;
}
h1 {
  font-size: 13px;
  line-height: 20px;
  font-weight: 400;
}
.controls {
  display: flex;
  justify-content: flex-end;
  gap: 16px;
  padding-right: 12px;
}

/* ribbon tabs */
.tabs {
  flex: 0 0 29px;
  display: flex;
  background: #3c4546;
  color: #fff;
  font-size: 13px;
}
.file {
  width: 66px;
  border: 0;
  background: linear-gradient(170deg, #63d03d, #4fa433);
}
.tab-list {
  display: flex;
  gap: 47px;
  padding: 0 32px 0 23px;
}
.style-tab, .active-tab {
  border: 0;
  font-size: 15px;
  font-style: italic;
}
.style-tab {
  width: 72px;
  background: #6d7a7c;
  color: #e4e9e9;
}
.active-tab {
  width: 142px;
  margin-left: 2px;
  background: #f7f9fc;
  color: #3c4546;
}
.tab-tools {
  flex: 1;
  display: flex;
  justify-content: flex-end;
  align-items: center;
  gap: 12px;
  padding: 0 8px 2px 0;
}
.pair {
  gap: 8px;
}
.help {
  font: 700 14px/16px "Open Sans", sans-serif;
}

/* ribbon */
.ribbon {
  flex: 0 0 113px;
  display: flex;
  border-bottom: 1px solid #aeb8ba;
}
.feature {
  width: 57px;
  margin: 2px 0;
  padding: 12px 0 0;
  border-right: 1px solid #a3a9ab;
  display: flex;
  align-items: center;
  justify-content: center;
}
.ribbon-main {
  flex: 1;
  display: flex;
  flex-direction: column;
}
.groups {
  flex: 0 0 88px;
  display: flex;
}
.group {
  height: 78px;
  margin-top: 5px;
  border-right: 1px solid #d3d7d9;
  padding-left: 14px;
}
.group h2 {
  height: 19px;
  font-size: 12px;
  line-height: 14px;
  font-weight: 700;
}
.curve {
  width: 232px;
  padding-left: 13px;
}
.collector {
  width: 201px;
  height: 26px;
  margin-left: 3px;
  padding: 1px;
  border: 1px solid #aeb2b4;
  background: #fff;
}
.collected {
  height: 100%;
  padding-left: 6px;
  background: #e9fadb;
  display: flex;
  align-items: center;
  gap: 5px;
}
.type {
  width: 200px;
}
.tiles {
  display: flex;
  gap: 1px;
}
.tile {
  width: 56px;
  height: 60px;
  border: 0;
  border-top: 3px solid #adb1b3;
  background: none;
  display: flex;
  flex-direction: column;
  align-items: center;
  line-height: 17px;
}
.tile.on {
  border: 1px solid #66c8f2;
  border-top-width: 3px;
  background: #cdeffe;
}
.tile.off {
  color: #a3a7a9;
  border-top-color: #d3d6d8;
}
.glyph {
  height: 21px;
  display: flex;
  align-items: center;
}
.settings {
  width: 184px;
}
.line {
  height: 26px;
  margin-bottom: 3px;
  display: flex;
  align-items: center;
}
.cmd {
  gap: 4px;
  padding-left: 4px;
}
.first {
  width: 74px;
  margin-right: 5px;
  justify-content: flex-start;
}
.spinner {
  width: 51px;
  height: 26px;
  margin-left: 4px;
  padding: 0 5px 0 4px;
  border: 1px solid #a9adaf;
  background: #fff;
  display: flex;
  align-items: center;
}
.spinner input {
  flex: 1;
  width: 20px;
  border: 0;
  background: none;
}
.spin-arrows {
  display: flex;
  flex-direction: column;
  gap: 8px;
}
.toggle {
  height: 25px;
  padding: 0 3px;
  border: 1px solid #a3a7a9;
  background: #dcdee0;
  display: flex;
  align-items: center;
  gap: 4px;
}
.symmetry {
  width: 144px;
}
.plane-box {
  width: 58px;
  height: 26px;
  margin-left: 4px;
  border: 1px solid #cfd2d4;
  background: #faf7fd;
  box-shadow: inset 0 0 0 2px #fff;
}
.ops {
  width: 86px;
}
.pause, .confirm {
  height: 84px;
  margin-top: 2px;
  padding: 0;
  display: flex;
  align-items: center;
  justify-content: center;
}
.ops {
  height: 84px;
  margin-top: 2px;
  padding-top: 3px;
}
.ops, .pause {
  border-right-color: #a9aeb0;
}
.pause {
  width: 69px;
}
.confirm {
  flex: 1;
  border: 0;
  gap: 11px;
}
.big {
  flex-direction: column;
  width: 29px;
}
.big span {
  height: 26px;
  display: flex;
  align-items: center;
}
.strip {
  flex: 0 0 24px;
  display: flex;
  gap: 1px;
  background: linear-gradient(#e9ebed, #e9ebed) 331px 0 no-repeat, #fff;
}
.strip-lead {
  width: 54px;
  background: #e9ebed;
}
.strip button {
  width: 71px;
  border: 0;
  padding-top: 1px;
  background: #dfe1e3;
}
.strip .narrow {
  width: 59px;
}
.tip {
  width: 264px;
  margin: 2px 0;
  border-left: 1px solid #a3a9ab;
  padding: 8px 3px 8px 13px;
  display: flex;
  align-items: center;
  gap: 4px;
}
.tip-box {
  flex: 1;
  height: 91px;
  padding: 10px 7px 9px;
  background: #dfe1e2;
  display: flex;
  flex-direction: column;
  justify-content: space-between;
}
.tip-box a {
  color: #1070b0;
}

/* body */
.body {
  flex: 1;
  min-height: 0;
  display: flex;
}
.side {
  flex: 0 0 294px;
  border-right: 3px solid #d9dfde;
  display: flex;
  flex-direction: column;
  background: #f7fafc;
}
.side-tabs {
  flex: 0 0 26px;
  margin-right: -3px;
  background: #d9dfde;
  display: flex;
}
.side-tab {
  width: 32px;
  border: 0;
  background: none;
  display: flex;
  align-items: center;
  justify-content: center;
}
.side-tab.on {
  background: #f7fafc;
}
.bar {
  flex: 0 0 32px;
  display: flex;
  align-items: center;
  padding: 0 7px 0 14px;
}
.bar-lead {
  width: 61px;
  display: flex;
  align-items: center;
  gap: 5px;
}
.wide {
  width: 64px;
}
.bar-set {
  display: flex;
  align-items: center;
  gap: 8px;
}
.ruled {
  height: 24px;
  margin-left: 4px;
  padding: 0 3px 0 9px;
  border-left: 1px solid #a9aeb0;
}
.joined {
  gap: 0;
  margin-left: 12px;
  padding-left: 4px;
  border-left: 1px solid #a9aeb0;
}
.bar-end {
  flex: 1;
  display: flex;
  align-items: center;
  justify-content: flex-end;
  gap: 10px;
}
.filter {
  flex: 0 0 29px;
  margin-bottom: 5px;
  padding-left: 12px;
  display: flex;
  align-items: center;
}
.filter-box {
  width: 211px;
  height: 29px;
  margin: 0 6px 0 4px;
  padding-right: 5px;
  border: 1px solid #a9b8b5;
  background: #fff;
  display: flex;
  align-items: center;
}
.filter-box input {
  flex: 1;
  min-width: 0;
  border: 0;
  padding: 0 5px;
  background: none;
}
.filter .flat + .flat {
  margin-left: 12px;
}
.pane {
  margin: 0 5px 0 8px;
  display: flex;
  overflow: hidden;
}
.pane ul {
  flex: 1;
  list-style: none;
}
.pane li {
  height: 22px;
  padding-left: 7px;
  display: flex;
  align-items: center;
  white-space: nowrap;
  overflow: hidden;
}
.node {
  width: 16px;
  margin: 0 5px 0 2px;
}
.pane .root {
  padding-left: 3px;
  gap: 6px;
}
.pane .faint {
  color: #b9ae96;
}
.tree {
  flex: 0 0 204px;
}
.rule {
  flex: 0 0 3px;
  margin: 0 5px 0 8px;
  background: #d9dfde;
}
.tree + .rule {
  margin-top: 1px;
}
.scroll {
  width: 15px;
  background: #dfe1e3;
  display: flex;
  flex-direction: column;
}
.cap {
  flex: 0 0 15px;
  border: 1px solid #d0d3d5;
  background: #f7f9fa;
  display: flex;
  align-items: center;
  justify-content: center;
}
.thumb {
  border: 1px solid #b9bdbf;
  background: #f8f8f9;
}
.tall {
  flex: 0 0 127px;
}
.mid {
  flex: 0 0 58px;
}
.low {
  flex: 0 0 88px;
}
.track-gap {
  flex: 0 0 2px;
}
.track-end {
  flex: 0 0 6px;
}
.rest {
  flex: 1;
}
.picker {
  flex: 0 0 25px;
  margin: 0 5px 0 8px;
  border: 1px solid #d0d3d5;
  display: flex;
  background: #f5f6f7;
}
.picker button {
  width: 24px;
  border: 0;
  border-right: 1px solid #d0d3d5;
  background: #e9ebec;
  display: flex;
  align-items: center;
  justify-content: center;
}
.picker select {
  flex: 1;
  appearance: none;
  border: 0;
  padding-left: 6px;
  background: none;
  color: #a3a7a9;
  opacity: 1;
}
.picker-arrow {
  width: 15px;
  border-left: 1px solid #d0d3d5;
  display: flex;
  align-items: center;
  justify-content: center;
}
.layer-list {
  flex: 0 0 119px;
}
.layer-list li {
  height: 20px;
}
.layer-list .node {
  margin-right: 9px;
}
.layer-list .root {
  height: 17px;
  padding: 0 0 3px 3px;
  gap: 8px;
  overflow: visible;
}
.items {
  flex: 1;
  min-height: 0;
  margin-bottom: 6px;
}
.items ul {
  margin-top: -2px;
}
.canvas {
  position: relative;
  flex: 1;
  min-width: 0;
  background: #fff;
}
.scene {
  display: block;
  width: 100%;
  height: 100%;
}
.cad {
  font: 14px "Liberation Mono", monospace;
  fill: #96622f;
}
.note {
  font: 300 20px "Noto Serif CJK SC", "Noto Sans CJK SC", serif;
  fill: #f50808;
}
.latin {
  font: 16px "Liberation Serif", serif;
}
.mode {
  font-size: 8px;
  fill: #222;
}
.view-bar {
  position: absolute;
  top: 7px;
  left: 301px;
  height: 32px;
  padding: 0 3px;
  border: 1px solid #9b9fa1;
  background: #f8f9fb;
  display: flex;
  align-items: center;
  gap: 2px;
}
.view-bar button {
  width: 24px;
  height: 24px;
}

/* status bar */
.status {
  flex: 0 0 47px;
  border-top: 1px solid #a9b8b5;
  background: #f6fafb;
  display: flex;
}
.status-tools {
  width: 90px;
  margin: 18px 0 4px;
  padding-left: 6px;
  border-right: 1px solid #a9aeb0;
  display: flex;
  align-items: center;
  gap: 8px;
}
.status-tools .held {
  width: 22px;
}
.messages {
  flex: 1;
  min-width: 0;
  padding: 8px 0 0 3px;
  font-size: 11px;
}
.messages p {
  display: flex;
  align-items: center;
  gap: 2px;
  white-space: nowrap;
}
.status-end {
  display: flex;
  align-items: center;
  padding: 13px 2px 0 0;
}
.finder {
  height: 26px;
  padding: 1px 2px 1px 3px;
  border: 1px solid #a9aeb0;
  border-width: 0 1px;
  display: flex;
}
.finder::before {
  content: "";
  width: 1px;
  margin: -1px 3px -1px 0;
  background: #a9aeb0;
}
.finder button {
  width: 28px;
  border: 1px solid #d0d3d5;
  background: none;
  display: flex;
  align-items: center;
  justify-content: center;
}
.finder .finder-drop {
  width: 14px;
  border-left: 0;
}
.picked {
  width: 97px;
  padding-left: 4px;
}
.selection {
  width: 178px;
  height: 25px;
  margin-right: 4px;
  padding-right: 5px;
  border: 1px solid #9b9fa1;
  background: linear-gradient(#c3c7c9, #c3c7c9) 160px 0 / 1px 100% no-repeat, #f5f7f8;
  display: flex;
  align-items: center;
}
.selection select {
  flex: 1;
  appearance: none;
  border: 0;
  padding-left: 6px;
  background: none;
}

/* watermark over the lower right corner */
.stamp {
  position: absolute;
  right: 17px;
  bottom: 4px;
  pointer-events: none;
}
.stamp-name {
  display: flex;
  gap: 2px;
  font: italic 400 40px/42px "Noto Sans CJK SC", sans-serif;
  color: #000;
}
.hot {
  color: #fb6430;
}
.stamp-url {
  font: italic 16px/16px "DejaVu Sans", sans-serif;
  color: rgba(90, 94, 96, 0.7);
}
.flame {
  position: absolute;
  left: 64px;
  top: -17px;
}
</style>
